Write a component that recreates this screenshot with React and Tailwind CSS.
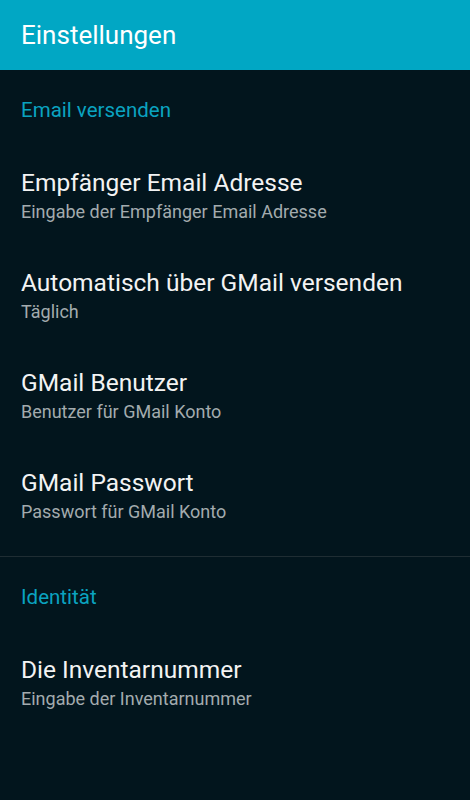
export default function App() {
  const sections = [
    {
      title: 'Email versenden',
      items: [
        ['Empfänger Email Adresse', 'Eingabe der Empfänger Email Adresse'],
        ['Automatisch über GMail versenden', 'Täglich'],
        ['GMail Benutzer', 'Benutzer für GMail Konto'],
        ['GMail Passwort', 'Passwort für GMail Konto'],
      ],
    },
    {
      title: 'Identität',
      items: [['Die Inventarnummer', 'Eingabe der Inventarnummer']],
    },
  ];

  return (
    <div className="min-h-[800px] bg-[#02151d] font-['Roboto',sans-serif]">
      <header className="h-[70px] bg-[#01a7c4] flex items-center px-[21px]">
        <h1 className="text-[26px] text-white">Einstellungen</h1>
      </header>

      {sections.map((section, i) => (
        <div key={section.title} className={i > 0 ? 'border-t border-[#1f2d33]' : ''}>
          <div className="h-[80px] flex items-center px-[21px]">
            <span className="text-[20.5px] text-[#0aa3c0]">{section.title}</span>
          </div>
          {section.items.map(([title, sub]) => (
            <div key={title} className="h-[100px] flex flex-col pt-[18px] px-[21px]">
              <div className="text-[24.5px] leading-[30px] text-[#f3f3f3]">{title}</div>
              <div className="mt-[2px] text-[18px] leading-[24px] text-[#a3abae]">{sub}</div>
            </div>
          ))}
          {i === 0 && <div className="h-[6px]" />}
        </div>
      ))}
    </div>
  );
}
